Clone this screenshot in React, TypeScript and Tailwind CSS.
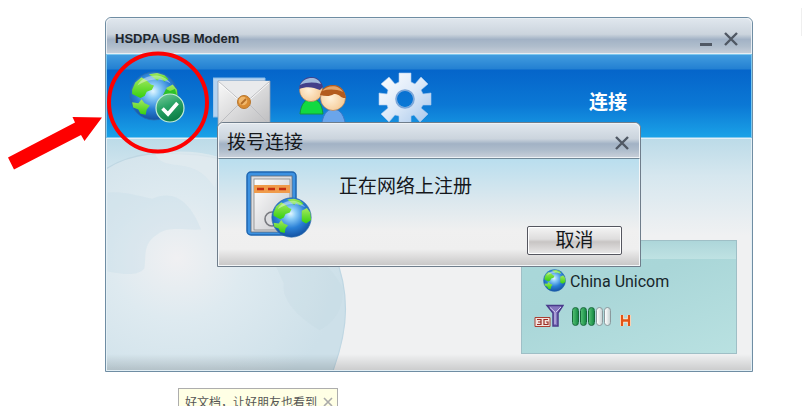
import React from "react";

const cjk = "font-['Liberation_Sans','Noto_Sans_CJK_SC',sans-serif]";

const Globe = ({ id, className }: { id: string; className: string }) => (
  <svg viewBox="0 0 48 48" className={className} aria-hidden="true">
    <defs>
      <radialGradient id={id} cx="0.48" cy="0.4" r="0.62">
        <stop offset="0" stopColor="#e2f6ff" />
        <stop offset="0.22" stopColor="#8ccdf8" />
        <stop offset="0.6" stopColor="#2a80d6" />
        <stop offset="1" stopColor="#124f9f" />
      </radialGradient>
      <linearGradient id={`${id}-land`} x1="0" y1="0" x2="0" y2="1">
        <stop offset="0" stopColor="#a5e85f" />
        <stop offset="1" stopColor="#35d010" />
      </linearGradient>
    </defs>
    <circle cx="24" cy="24" r="23" fill={`url(#${id})`} stroke="#2a6cae" strokeWidth="0.8" />
    <g fill={`url(#${id}-land)`}>
      <path d="M3 18L6 11L12 6L17 9L21 13L24 14L22 18L17 20L15 24L11 26L7 24L3 22Z" />
      <path d="M19 3L27 2L34 4L38 8L34 10L30 7L27 9L23 6Z" />
      <path d="M36 16L42 13L46 18L47 27L41 31L36 28Z" />
      <path d="M3 30L9 31L12 27L15 31L20 33L17 37L16 42L11 41L9 37L4 35Z" />
    </g>
    <path d="M8 14C14 2 33 1 40 12C30 6 18 7 8 14Z" fill="#fff" opacity="0.4" />
  </svg>
);

const ConnectIcon = () => (
  <span className="relative block h-[52px] w-[57px]">
    <Globe id="globe-main" className="size-[50px]" />
    <svg viewBox="0 0 34 34" className="absolute right-0 bottom-0 size-[34px]" aria-hidden="true">
      <defs>
        <linearGradient id="tick" x1="0" y1="0" x2="0.4" y2="1">
          <stop offset="0" stopColor="#7dcf9f" />
          <stop offset="0.5" stopColor="#2ba467" />
          <stop offset="1" stopColor="#0d8048" />
        </linearGradient>
      </defs>
      <path d="M11 6L14 0L18 2L23 0L25 8L15 9Z" fill="#2dc12a" />
      <circle cx="18" cy="19" r="14" fill="url(#tick)" stroke="#c4ecd8" strokeWidth="1.2" />
      <path d="M10.500 19.500L16 25L25.500 14" fill="none" stroke="#fff" strokeWidth="3.6" />
    </svg>
  </span>
);

const MailIcon = () => (
  <svg viewBox="0 0 58 50" className="h-[50px] w-[58px]" aria-hidden="true">
    <defs>
      <linearGradient id="mail" x1="0" y1="0" x2="1" y2="1">
        <stop offset="0" stopColor="#fafafa" />
        <stop offset="1" stopColor="#bdbdbf" />
      </linearGradient>
    </defs>
    <path d="M0 1H52V40H0Z" fill="#b5d3f0" stroke="#8abce6" />
    <path d="M5 4H57V48H5Z" fill="url(#mail)" stroke="#8d9caf" strokeWidth="0.8" />
    <path d="M5 4L31 27L57 4Z" fill="#e9eaec" />
    <path d="M5 4L31 27L57 4M5 48L28 25M57 48L34 25" fill="none" stroke="#bdbec2" />
    <path d="M6 6L31 28L56 6" fill="none" stroke="#fff" strokeWidth="0.8" />
    <circle cx="31" cy="25" r="6.5" fill="#d98b32" stroke="#b8772f" />
    <circle cx="30" cy="24" r="4.3" fill="#f0b76b" />
    <path d="M28 27L33 22" stroke="#b36d28" strokeWidth="1.8" />
  </svg>
);

const UsersIcon = () => (
  <svg viewBox="0 0 50 54" className="h-[54px] w-[50px]" aria-hidden="true">
    <defs>
      <radialGradient id="face" cx="0.4" cy="0.5" r="0.6">
        <stop offset="0" stopColor="#fff1da" />
        <stop offset="1" stopColor="#f5c994" />
      </radialGradient>
    </defs>
    <path d="M2 37C3 26 8 22 13 22C21 22 24 28 25 37Z" fill="#12d941" stroke="#14943b" />
    <circle cx="13" cy="13" r="11.5" fill="url(#face)" stroke="#ae7547" strokeWidth="0.6" />
    <path d="M1 12C2 3 8 0 13 0C20 0 24 5 25 10L22 13C15 10 9 9 1 12Z" fill="#43408a" />
    <path d="M2 8C6 0 19 -2 23 7C16 5 9 5 2 8Z" fill="#9fb9dc" />
    <path d="M23 52C24 38 29 32 35 32C42 32 47 38 48 52Z" fill="#6aa5eb" stroke="#3c78c8" />
    <circle cx="35" cy="21" r="12.5" fill="url(#face)" stroke="#ad7045" strokeWidth="0.6" />
    <path d="M22 18C24 10 30 8 35 8C43 8 47 14 48 21C43 22 41 16 36 17C31 20 27 19 22 18Z" fill="#b35b1e" />
    <path d="M24 14C29 8 41 7 45 15C38 12 31 12 24 14Z" fill="#e3a468" />
  </svg>
);

const GearIcon = () => (
  <svg viewBox="0 0 54 54" className="size-[54px]" aria-hidden="true">
    <defs>
      <linearGradient id="gear" x1="0" y1="0" x2="1" y2="1">
        <stop offset="0" stopColor="#fff" />
        <stop offset="0.5" stopColor="#dce9f8" />
        <stop offset="1" stopColor="#a3c4ea" />
      </linearGradient>
    </defs>
    <path
      fillRule="evenodd"
      d="M21 1H33V10L37 12L43 5L50 12L43 18L45 22L53 21V33H45L43 36L50 42L42 50L36 43L33 44V53H21V44L17 43L11 50L3 42L10 36L9 33H1V21L9 22L10 18L3 12L11 5L17 12L21 10ZM27 18.500A8.500 8.500 0 1 0 27 35.500A8.500 8.500 0 1 0 27 18.500Z"
      fill="url(#gear)"
      stroke="#a9cbf0"
      strokeWidth="0.6"
    />
    <circle cx="27" cy="27" r="9" fill="none" stroke="#7ba6d8" strokeWidth="1.6" />
  </svg>
);

const DialIcon = () => (
  <span className="relative block h-[67px] w-[66px] shrink-0">
    <svg viewBox="0 0 51 65" className="h-[65px] w-[51px]" aria-hidden="true">
      <defs>
        <linearGradient id="device" x1="0" y1="0" x2="1" y2="1">
          <stop offset="0" stopColor="#fff" />
          <stop offset="1" stopColor="#c4c5c9" />
        </linearGradient>
      </defs>
      <rect x="1" y="1" width="49" height="63" rx="4" fill="#3c92e2" stroke="#1f66b0" strokeWidth="1.5" />
      <rect x="5" y="5" width="41" height="56" fill="#dcdde0" stroke="#5e6874" strokeWidth="0.8" />
      <rect x="8" y="8" width="36" height="51" fill="url(#device)" stroke="#888" strokeWidth="0.8" />
      <rect x="8" y="14" width="36" height="8" fill="#ef9b4b" />
      <path d="M11 18H18M22 18H29M33 18H40" stroke="#c52d10" strokeWidth="2.500" />
      <circle cx="26" cy="48" r="7" fill="#dcdde0" stroke="#77797f" strokeWidth="1.6" />
    </svg>
    <Globe id="globe-dial" className="absolute right-0 bottom-0 size-[41px]" />
  </span>
);

const CloseButton = () => (
  <button type="button" aria-label="Close" className="size-[14px]">
    <svg viewBox="0 0 14 14" className="size-[14px]" fill="none" stroke="#505864" strokeWidth="2.4">
      <path d="M1 1L13 13M13 1L1 13" />
    </svg>
  </button>
);

const bar = "bg-[linear-gradient(#dfe6ed_0%,#cbd4dd_45%,#a2b2c5_60%,#afbdcc_80%,#c6ced8_100%)]";

const tools = [
  { name: "Connect", icon: <ConnectIcon />, className: "ml-[22px] mt-4" },
  { name: "Messages", icon: <MailIcon />, className: "ml-[27px] mt-[22px]" },
  { name: "Contacts", icon: <UsersIcon />, className: "ml-[27px] mt-[22px]" },
  { name: "Settings", icon: <GearIcon />, className: "ml-[30px] mt-[17px]" },
];

const Toolbar = () => (
  <nav className="flex h-[84px] items-start overflow-hidden border border-[#7cc8ef] bg-[linear-gradient(#429cdf_0px,#2380d2_14px,#0565ca_15px,#0b78d5_50px,#1ba4e8_84px)]">
    {tools.map((tool) => (
      <button key={tool.name} type="button" aria-label={tool.name} className={tool.className}>
        {tool.icon}
      </button>
    ))}
    <h2 className="mt-[34px] mr-[124px] ml-auto text-[19px] leading-7 font-bold whitespace-nowrap text-white">连接</h2>
  </nav>
);

const Backdrop = () => (
  <svg viewBox="0 0 244 232" className="absolute top-0 left-0 h-full w-[244px]" aria-hidden="true">
    <defs>
      <radialGradient id="world" cx="0.3" cy="0.48" r="0.7">
        <stop offset="0" stopColor="#f0f0f2" />
        <stop offset="0.4" stopColor="#deeaf0" />
        <stop offset="1" stopColor="#cde0e9" />
      </radialGradient>
    </defs>
    <path d="M-3 31C25 12 57 13 91 16C171 26 239 90 239 171C239 194 233 215 226 234H-3Z" fill="url(#world)" stroke="#bfd7e3" strokeWidth="1.2" />
    <path d="M48 15C50 22 58 25 70 26C90 28 98 35 108 49L112 18C90 12 69 11 48 15Z" fill="#e3ebf0" opacity="0.7" />
    <path d="M0 54C15 52 29 57 45 60C67 50 84 64 94 91C76 92 61 87 50 96C35 105 39 118 37 130C30 138 17 136 0 133Z" fill="#c7dce7" opacity="0.35" />
    <path d="M166 121C190 115 214 108 236 149C238 170 227 185 213 192C193 180 174 162 177 145Z" fill="#bdd5e0" opacity="0.22" />
  </svg>
);

const SignalRow = () => (
  <div className="flex h-6 items-end gap-2">
    <svg viewBox="0 0 30 24" className="h-6 w-[30px]" aria-label="3G">
      <path d="M1 13.500H16V22.500H1Z" fill="#f3e4df" stroke="#aa3e32" />
      <path d="M3 15.500H7V20.500H3M4 18H7M14 15.500H10V20.500H14V18H12" fill="none" stroke="#9b2b23" strokeWidth="1.200" />
      <path d="M13 1.500H29L24 9V22H19V9Z" fill="#8476be" stroke="#4a3b8b" strokeWidth="1.500" />
      <path d="M16 3.500L21 8V20M27 3L22 8" fill="none" stroke="#d1c9f0" />
    </svg>
    <div className="flex gap-px pb-0.5" role="img" aria-label="Signal 3 of 5">
      {[1, 2, 3, 4, 5].map((n) => (
        <span
          key={n}
          className={
            n <= 3
              ? "h-[19px] w-[7px] rounded-full border border-[#17683a] bg-linear-to-r from-[#4fbf72] to-[#128b45]"
              : "h-[19px] w-[7px] rounded-full border border-[#8b999d] bg-linear-to-r from-white to-[#c8d4d5]"
          }
        />
      ))}
    </div>
    <svg viewBox="0 0 13 13" className="mb-px size-[13px]" aria-label="HSDPA">
      <path d="M3 1V12M10 1V12M3 6.500H10" fill="none" stroke="#fff1dd" strokeWidth="4" />
      <path d="M3 1V12M10 1V12M3 6.500H10" fill="none" stroke="#e25416" strokeWidth="2.400" />
    </svg>
  </div>
);

const NetworkPanel = () => (
  <section className="relative mt-auto mr-[14px] mb-4 ml-auto h-[114px] w-[216px] border border-[#9fbfc6] bg-[linear-gradient(160deg,#a9d8da_0%,#a9d6d8_40%,#b9e1e1_100%)] px-3 pt-[25px]">
    <div className="absolute inset-x-0 top-0 h-[18px] bg-linear-to-b from-[#add6da] to-[#bfe2e3]" />
    <div className="relative flex items-center gap-1 pl-[9px]">
      <Globe id="globe-net" className="size-[23px]" />
      <span className="pt-1 text-base leading-6 whitespace-nowrap text-[#17262b] font-['Roboto',sans-serif]">China Unicom</span>
    </div>
    <div className="mt-[10px]">
      <SignalRow />
    </div>
  </section>
);

const DialDialog = () => (
  <div
    role="dialog"
    aria-labelledby="dial-title"
    className="absolute top-[104px] left-[111px] w-[424px] rounded-t-md border border-[#6f7d8b] bg-white"
  >
    <header className={`flex h-[35px] items-center justify-between rounded-t-md border border-[#eef2f5] pt-1 pr-[10px] pl-2 ${bar}`}>
      <h3 id="dial-title" className="text-[19px] leading-7 text-[#15181c]">拨号连接</h3>
      <CloseButton />
    </header>
    <div className="flex h-[108px] border border-t-[#6f8797] border-[#f3f6f8] bg-[linear-gradient(#b9deee_0%,#dce8ee_40%,#f0f0f0_68%,#efefef_85%,#c9c8c8_100%)] pt-3 pr-[17px] pb-[10px] pl-[27px]">
      <DialIcon />
      <p className="ml-[27px] pt-0.5 text-[19px] leading-7 text-[#15181c]">正在网络上注册</p>
      <button
        type="button"
        className="mt-auto ml-auto h-[29px] w-[95px] rounded-xs border border-[#55565f] bg-[linear-gradient(#f4f4f4_0%,#dedddd_45%,#c8c5c4_55%,#e9e8e8_100%)] text-[19px] leading-6 text-[#15181c] inset-ring inset-ring-white"
      >
        取消
      </button>
    </div>
  </div>
);

const ModemWindow = () => (
  <main className="relative flex min-h-[355px] flex-col rounded-t-md border border-[#6f8da3] bg-white">
    <header className={`flex h-[36px] items-center rounded-t-md border border-[#e9eef3] pr-[13px] pl-2 pt-1.5 ${bar}`}>
      <h1 className="text-[13px] leading-5 font-bold text-[#20252b] font-['Liberation_Sans',sans-serif]">HSDPA USB Modem</h1>
      <button type="button" aria-label="Minimize" className="mr-3 ml-auto flex h-[14px] w-3 items-end">
        <span className="h-[3px] w-3 bg-[#505864]" />
      </button>
      <CloseButton />
    </header>
    <Toolbar />
    <div className="relative flex flex-1 border border-[#e3eff5] bg-[linear-gradient(#bcdbe8_0%,#d6e7ef_16%,#f0f1f2_42%)]">
      <Backdrop />
      <div className="absolute inset-x-0 bottom-0 h-4 bg-linear-to-b from-transparent to-black/15" />
      <NetworkPanel />
    </div>
    <DialDialog />
  </main>
);

const Callout = () => (
  <svg viewBox="0 0 220 180" className="pointer-events-none absolute top-0 left-0 h-[180px] w-[220px]" aria-hidden="true">
    <ellipse cx="158" cy="102.500" rx="49" ry="49" fill="none" stroke="#fe0000" strokeWidth="4" />
    <path d="M8 157.500L75 122.500L72.500 117L102 117.500L84.500 141L81 135L14 169.500Z" fill="#fe0000" />
  </svg>
);

const App = () => {
  return (
    <div className={`relative h-screen overflow-hidden bg-white pt-[17px] pr-[49px] pl-[105px] ${cjk}`}>
      <ModemWindow />
      <aside className="mt-4 ml-[73px] flex h-10 w-[160px] items-start justify-between border border-[#adadad] bg-[#ffffe5] px-1 pt-1 pl-[6px]">
        <p className="text-xs leading-5 whitespace-nowrap text-[#555]">好文档，让好朋友也看到</p>
        <button type="button" aria-label="Dismiss" className="mt-1 size-[10px]">
          <svg viewBox="0 0 10 10" className="size-[10px]" fill="none" stroke="#aaa" strokeWidth="1.600">
            <path d="M1 1L9 9M9 1L1 9" />
          </svg>
        </button>
      </aside>
      <Callout />
      <div className="absolute top-2 right-0 h-7 w-px bg-[#efefef]" />
    </div>
  );
};

export default App;
